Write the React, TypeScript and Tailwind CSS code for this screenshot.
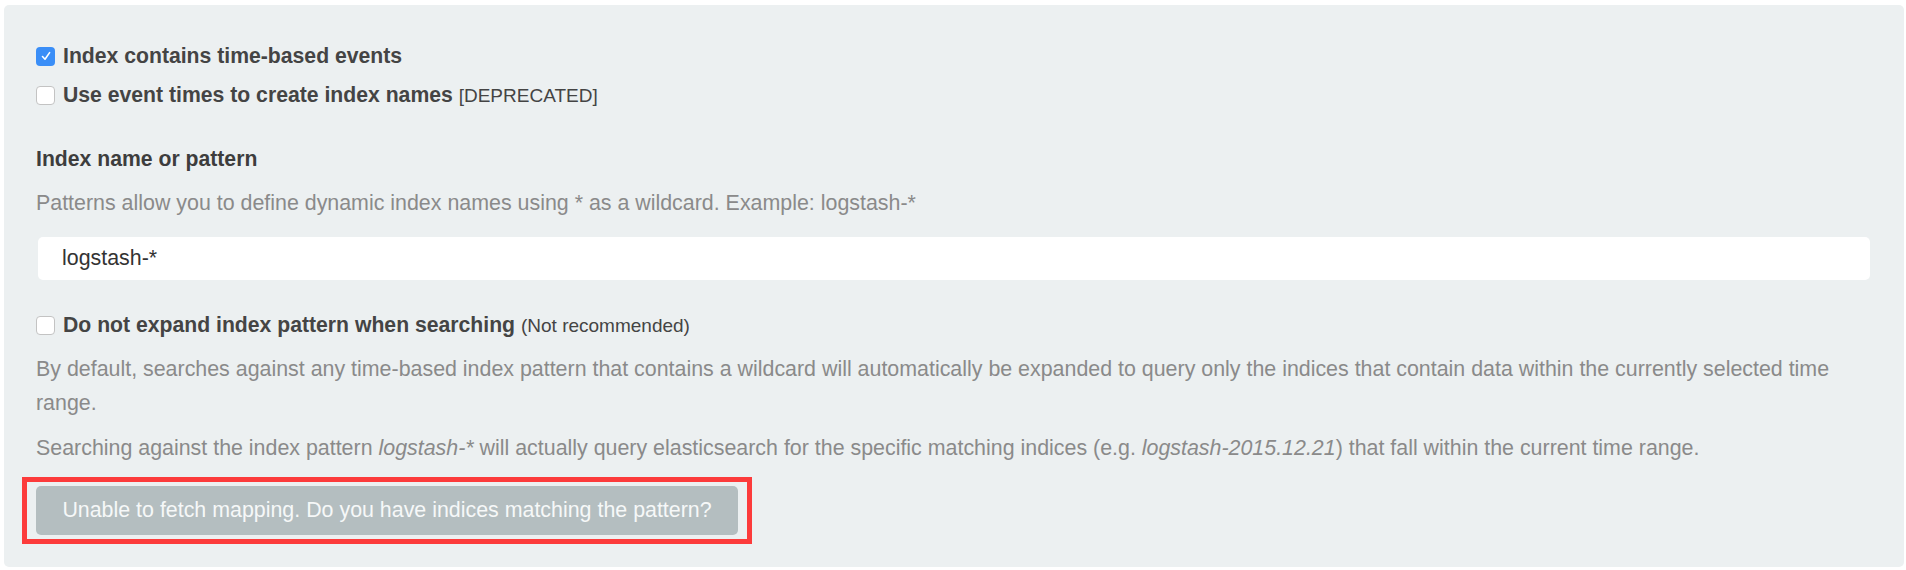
const Checkbox = ({ checked }: { checked?: boolean }) => {
    if (checked) {
        return (
            <span className="flex items-center justify-center w-[19px] h-[19px] rounded-[4px] bg-[#3a8ef7] shrink-0">
                <svg width="12" height="12" viewBox="0 0 12 12" fill="none">
                    <path d="M2.5 6.5 L5 9.2 L9.6 2.6" stroke="white" strokeWidth="1.6" strokeLinecap="round" strokeLinejoin="round" />
                </svg>
            </span>
        )
    }
    return (
        <span className="block w-[19px] h-[19px] rounded-[4px] bg-white border border-[#c3c3c3] shrink-0" />
    )
}

const CheckRow = ({
    checked,
    label,
    note,
    className
}: {
    checked?: boolean;
    label: string;
    note: string;
    className?: string;
}) => {
    return (
        <div className={`flex items-center gap-[8px] h-[30px] ${className ?? ''}`}>
            <Checkbox checked={checked} />
            <span className="text-[21.2px] leading-[30px] text-[#444444] whitespace-nowrap">
                <span className="font-bold">{label}</span>{' '}
                <span className="text-[19px]">{note}</span>
            </span>
        </div>
    )
}

const App = () => {
    return (
        <div className="w-[1906px] h-[570px] bg-white pt-[5px] pl-[4px] font-['Liberation_Sans',Arial,sans-serif]">
            <div className="w-[1900px] h-[562px] bg-[#ecf0f1] rounded-[5px] pt-[36px] pl-[32px] pr-[34px]">
                <CheckRow checked label="Index contains time-based events" note="" />
                <CheckRow className="mt-[9px]" label="Use event times to create index names" note="[DEPRECATED]" />

                <h3 className="mt-[34px] text-[21.2px] leading-[30px] font-bold text-[#3d3d3d]">
                    Index name or pattern
                </h3>
                <p className="mt-[14px] text-[21.4px] leading-[30px] text-[#8a8a8a]">
                    Patterns allow you to define dynamic index names using * as a wildcard. Example: logstash-*
                </p>
                <div className="mt-[19px] ml-[2px] h-[43px] bg-white rounded-[5px] flex items-center pl-[24px] text-[21.4px] text-[#333333]">
                    logstash-*
                </div>

                <CheckRow className="mt-[30px]" label="Do not expand index pattern when searching" note="(Not recommended)" />

                <p className="mt-[12px] text-[21.4px] leading-[34px] text-[#8a8a8a]">
                    By default, searches against any time-based index pattern that contains a wildcard will automatically be expanded to query only the indices that contain data within the currently selected time range.
                </p>
                <p className="mt-[11px] text-[21.4px] leading-[34px] text-[#8a8a8a]">
                    Searching against the index pattern <i>logstash-*</i> will actually query elasticsearch for the specific matching indices (e.g. <i>logstash-2015.12.21</i>) that fall within the current time range.
                </p>

                <div className="mt-[12px] ml-[-14px] inline-block border-[5px] border-[#fc3b3b] pt-[4px] pb-[4px] pl-[9px] pr-[9px]">
                    <button className="w-[702px] h-[49px] rounded-[5px] bg-[#b4bec0] text-[21.4px] text-[#f6f8f8]">
                        Unable to fetch mapping. Do you have indices matching the pattern?
                    </button>
                </div>
            </div>
        </div>
    )
}

export default App;
